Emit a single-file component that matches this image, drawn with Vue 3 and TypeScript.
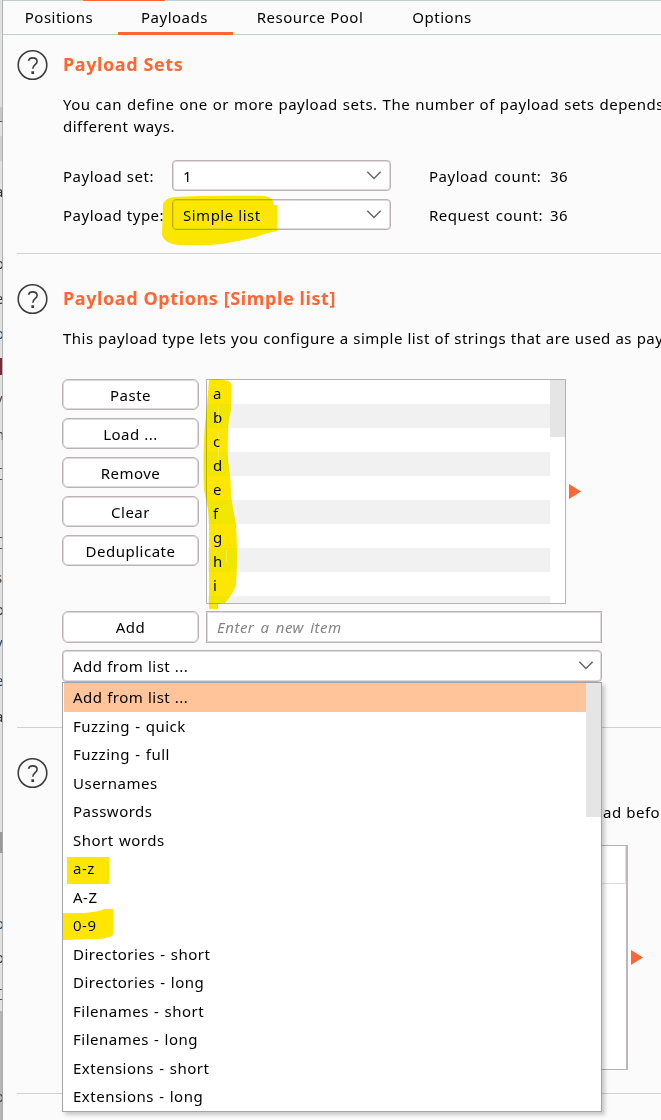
<script setup lang="ts">
const tabs = [
  { label: 'Positions', id: 'positions' },
  { label: 'Payloads', id: 'payloads', active: true },
  { label: 'Resource Pool', id: 'pool' },
  { label: 'Options', id: 'options' },
]
const buttons = ['Paste', 'Load ...', 'Remove', 'Clear', 'Deduplicate']
const payloads = ['a', 'b', 'c', 'd', 'e', 'f', 'g', 'h', 'i', '']
const lists = [
  'Add from list ...', 'Fuzzing - quick', 'Fuzzing - full', 'Usernames', 'Passwords',
  'Short words', 'a-z', 'A-Z', '0-9', 'Directories - short', 'Directories - long',
  'Filenames - short', 'Filenames - long', 'Extensions - short', 'Extensions - long',
]
// Slivers of the window behind this one, visible along the left edge
const glyphs = [
  { t: 'e', y: 304, c: '#333' }, { t: 'a', y: 197, c: '#333' }, { t: 'l', y: 235, c: '#223' },
  { t: 'o', y: 269, c: '#333' }, { t: 'o', y: 339, c: '#246' }, { t: 'v', y: 404, c: '#543' },
  { t: 'n', y: 440, c: '#333' }, { t: 's', y: 583, c: '#543' }, { t: 'o', y: 615, c: '#333' },
  { t: 'v', y: 648, c: '#246' }, { t: 'e', y: 686, c: '#246' }, { t: 'a', y: 722, c: '#333' },
  { t: 'o', y: 929, c: '#246' }, { t: 'o', y: 963, c: '#333' }, { t: 'o', y: 1102, c: '#543' },
]
</script>

<template>
  <div class="window">
    <svg class="behind" width="3" height="1120" viewBox="0 0 3 1120">
      <rect width="3" height="1120" fill="#e1e1e2" />
      <rect y="107" width="3" height="14" fill="#c8c8c8" />
      <rect y="136" width="3" height="25" fill="#cfcfcf" />
      <rect y="358" width="2" height="17" fill="#7b2a38" />
      <rect y="832" width="3" height="21" fill="#999" />
      <rect y="1011" width="3" height="109" fill="#b4b5b6" />
      <path d="M0 121.500H3M0 468.500H3M0 479.500H3M0 537.500H3M0 548.500H3M0 989.500H3M0 999.500H3" stroke="#555" />
      <text v-for="g in glyphs" :key="g.y" x="-5" :y="g.y" :fill="g.c" font-size="15">{{ g.t }}</text>
      <rect x="2" width="1" height="1120" fill="#a9a9a9" opacity=".85" />
    </svg>

    <main class="panel">
      <nav class="tabs">
        <span v-for="t in tabs" :key="t.id" class="tab" :class="[t.id, { active: t.active }]">{{ t.label }}</span>
        <i class="parent-tab" />
      </nav>

      <section class="section sets">
        <svg class="help" viewBox="0 0 32 32"><circle cx="16" cy="16" r="14.300" /><path d="M12 11.800C12.600 9.700 14.100 8.900 16.100 8.900C18.800 8.900 20.600 10.300 20.600 12.500C20.600 15.700 16.300 15.800 16.300 19.700" /><path class="dot" d="M14.900 22.300H17.600V25H14.900Z" /></svg>
        <div class="body">
          <h2>Payload Sets</h2>
          <p>You can define one or more payload sets. The number of payload sets depends<br />different ways.</p>
          <div class="form">
            <label>Payload set:</label>
            <div class="select">1<svg class="chev" viewBox="0 0 16 10"><path d="M1.300 1.300L8 8L14.700 1.300" /></svg></div>
            <span class="count">Payload count:</span><span class="value">36</span>
            <label>Payload type:</label>
            <div class="select simple">Simple list<svg class="chev" viewBox="0 0 16 10"><path d="M1.300 1.300L8 8L14.700 1.300" /></svg></div>
            <span class="count">Request count:</span><span class="value">36</span>
          </div>
        </div>
      </section>

      <section class="section options">
        <svg class="help" viewBox="0 0 32 32"><circle cx="16" cy="16" r="14.300" /><path d="M12 11.800C12.600 9.700 14.100 8.900 16.100 8.900C18.800 8.900 20.600 10.300 20.600 12.500C20.600 15.700 16.300 15.800 16.300 19.700" /><path class="dot" d="M14.900 22.300H17.600V25H14.900Z" /></svg>
        <div class="body">
          <h2>Payload Options [Simple list]</h2>
          <p>This payload type lets you configure a simple list of strings that are used as payloads.</p>
          <div class="editor">
            <div class="buttons">
              <button v-for="b in buttons" :key="b">{{ b }}</button>
            </div>
            <div class="listbox">
              <ul><li v-for="(p, i) in payloads" :key="i">{{ p }}</li></ul>
              <div class="track"><i /></div>
            </div>
            <svg class="arrow" viewBox="0 0 12 15"><path d="M0 0L12 7.500L0 15Z" /></svg>
          </div>
          <div class="add">
            <button>Add</button>
            <div class="input">Enter a new item</div>
          </div>
          <div class="combo">
            <div class="select">Add from list ...<svg class="chev" viewBox="0 0 16 10"><path d="M1.300 1.300L8 8L14.700 1.300" /></svg></div>
            <div class="menu">
              <ul><li v-for="(l, i) in lists" :key="l" :class="{ chosen: i === 0 }">{{ l }}</li></ul>
              <div class="thumb" />
            </div>
          </div>
        </div>
      </section>

      <section class="section processing">
        <svg class="help" viewBox="0 0 32 32"><circle cx="16" cy="16" r="14.300" /><path d="M12 11.800C12.600 9.700 14.100 8.900 16.100 8.900C18.800 8.900 20.600 10.300 20.600 12.500C20.600 15.700 16.300 15.800 16.300 19.700" /><path class="dot" d="M14.900 22.300H17.600V25H14.900Z" /></svg>
        <div class="body">
          <p class="tail">ad before</p>
          <div class="rules">
            <div class="table"><div class="thead" /></div>
            <svg class="arrow" viewBox="0 0 12 15"><path d="M0 0L12 7.500L0 15Z" /></svg>
          </div>
        </div>
      </section>
    </main>

    <!-- Highlighter strokes over the selected values -->
    <svg class="marker" width="661" height="1120" viewBox="0 0 661 1120">
      <path d="M163 204Q165 198 175 197Q210 195 265 196Q274 198 274 205H277V231Q266 233 256 237Q240 241 222 244Q205 246 178 245Q164 243 162 235Z" />
      <path d="M209 380Q219 378 229 381Q232 383 231 390V411Q228 420 228 435Q227 455 229 467Q231 480 231 495Q233 510 236 524Q238 555 236 585Q233 594 225 603L218 604V609H209V520Q208 505 204 490Q203 465 204 440Q205 420 207 405Z" />
      <path d="M67 857H109V884H67Z" />
      <path d="M63 913Q95 914 104 909H113V935Q108 939 96 939L63 940Z" />
    </svg>
    <svg class="marker-gaps" width="661" height="1120" viewBox="0 0 661 1120">
      <path d="M218.500 407V425M218.500 432V440M218.500 447V460M226.500 550V562" />
    </svg>
  </div>
</template>

<style>
html, body { margin: 0; overflow: hidden; background: #fbfbfb; }
</style>

<style scoped>
.window { position: relative; display: flex; width: 661px; height: 1120px; overflow: hidden; background: #fbfbfb; color: #000; font: 15px/22px "Noto Sans", "Open Sans", sans-serif; letter-spacing: .5px; word-spacing: .2px; white-space: nowrap; }
.window * { box-sizing: border-box; }
.behind { flex: none; display: block; }
.panel { flex: none; width: 658px; }
h2, p, ul { margin: 0; padding: 0; list-style: none; }
.tabs { position: relative; display: flex; height: 35px; border-top: 1px solid #c5cecc; border-bottom: 1px solid #c5cecc; }
.tab { height: 34px; padding-top: 5px; text-align: center; }
.positions { width: 115px; padding-right: 3px; }
.payloads { width: 115px; padding-right: 2px; }
.pool { width: 148px; padding-left: 6px; }
.options.tab { width: 116px; padding-left: 6px; }
.active { border-bottom: 3px solid #ff6633; }
.parent-tab { position: absolute; left: 80px; top: -1px; width: 82px; height: 1px; background: #ff6633; }
.section { display: flex; gap: 14px; margin-left: 14px; border-bottom: 1px solid #cfd1d1; }
.sets { height: 219px; padding-top: 14px; }
.section.options { height: 474px; padding-top: 29px; }
.processing { height: 366px; padding-top: 29px; }
.help { flex: none; width: 32px; height: 32px; margin-left: -1px; fill: none; stroke: #3d3d3d; stroke-width: 1.600; transform: translateX(.5px); }
.help .dot { fill: #3d3d3d; stroke: none; }
.body { flex: 1; min-width: 0; padding-left: 1px; }
h2 { height: 30px; padding-top: 4px; font-size: 18px; line-height: 22px; color: #ff6633; letter-spacing: .6px; word-spacing: 0; }
.sets p { margin-top: 14px; word-spacing: .6px; }
.section.options p { margin-top: 14px; }
.form { display: grid; grid-template-columns: 109px 219px 121px auto; row-gap: 8px; grid-auto-rows: 31px; align-items: center; margin-top: 23px; line-height: 31px; }
.form label, .form .count, .form .value { padding-top: 2px; }
.count, .value { padding-left: 38px; }
.count { word-spacing: 1.500px; }
.select { display: flex; align-items: center; justify-content: space-between; height: 31px; padding: 0 8px 0 10px; background: #fff; border: 1px solid #b9b3b6; box-shadow: inset 0 0 0 1px #ded9dc; border-radius: 4px; line-height: 29px; }
.form .select { padding-top: 1px; line-height: 30px; }
.simple { letter-spacing: .5px; }
.chev { width: 16px; height: 10px; fill: none; stroke: #666; stroke-width: 1.500; transform: translateY(-.5px); }
.editor { display: flex; align-items: center; height: 225px; margin: 30px 0 0 -1px; }
.buttons { display: flex; flex-direction: column; gap: 8px; align-self: flex-start; width: 137px; margin-right: 7px; }
button { display: block; width: 137px; height: 31px; padding: 0; font: inherit; letter-spacing: inherit; word-spacing: inherit; color: inherit; background: #fff; border: 1px solid #b9b3b6; box-shadow: inset 0 0 0 1px #ded9dc; border-radius: 6px; }
.listbox { display: flex; width: 360px; height: 225px; border: 1px solid #b5b2b3; background: #fff; overflow: hidden; }
.listbox ul { flex: 1; padding-left: 1px; }
.listbox li { height: 24px; padding-left: 5px; line-height: 26px; }
.listbox li:nth-child(even) { background: #f1f1f1; }
.track { width: 15px; }
.track i { display: block; height: 57px; background: #e5e5e5; }
.arrow { width: 12px; height: 15px; margin-left: 3px; fill: #ff6633; }
.add { display: flex; gap: 7px; margin: 7px 0 0 -1px; }
.add button { height: 32px; }
.input { width: 396px; height: 32px; padding-left: 10px; border: 1px solid #b9b3b6; box-shadow: inset 0 0 0 1px #ded9dc; background: #fff; line-height: 30px; font-style: italic; color: #858585; word-spacing: 1.800px; }
.combo { position: relative; width: 540px; margin: 7px 0 0 -1px; }
.combo .select { height: 32px; padding-right: 7px; }
.menu { position: absolute; z-index: 2; top: 32px; left: 0; width: 540px; height: 430px; display: flex; background: #fff; border: 1px solid #a5a5a5; box-shadow: 3px 3px 4px rgba(0,0,0,.2); }
.menu ul { flex: 1; margin-left: 1px; word-spacing: .8px; }
.menu li { height: 28.500px; padding-left: 9px; line-height: 29.600px; }
.menu li.chosen { background: #ffc499; word-spacing: .2px; }
.thumb { width: 15px; height: 134px; background: #e5e5e5; }
.processing .body { padding-top: 44px; }
.tail { margin-left: 540px; }
.rules { display: flex; align-items: center; margin: 22px 0 0 -1px; }
.table { width: 566px; height: 225px; background: #fff; border: 1px solid #b5b0b2; border-right: 2px solid #bdb7ba; }
.thead { height: 38px; border-bottom: 1px solid #ddd; border-right: 1px solid #e2e2e2; }
.marker, .marker-gaps { position: absolute; z-index: 4; inset: 0; pointer-events: none; }
.marker { fill: #ffe600; mix-blend-mode: darken; }
.marker-gaps { stroke: #fff3a0; fill: none; opacity: .5; }
</style>
